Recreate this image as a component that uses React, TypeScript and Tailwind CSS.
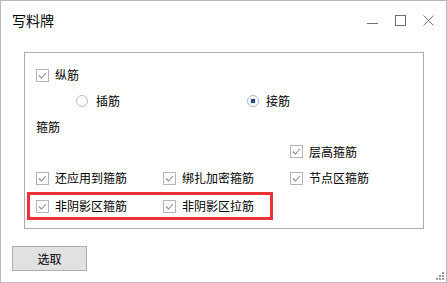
import React from "react";

const font = { fontFamily: '"Noto Sans CJK SC", "Noto Sans", sans-serif' };

function Check() {
  return (
    <svg width="13" height="13" viewBox="0 0 13 13" className="shrink-0">
      <rect x="0.5" y="0.5" width="12" height="12" fill="#fff" stroke="#b4b4b4" />
      <path d="M3 6.5 L5.5 9 L10 4" fill="none" stroke="#8c8c8c" strokeWidth="1.1" />
    </svg>
  );
}

function CheckItem({ label, w }: { label: string; w?: string }) {
  return (
    <div className={`flex items-center gap-[6px] ${w ?? ""}`}>
      <Check />
      <span className="text-[12px] leading-none text-black">{label}</span>
    </div>
  );
}

function Radio({ on }: { on?: boolean }) {
  return (
    <svg width="12" height="12" viewBox="0 0 12 12" className="shrink-0">
      <circle cx="6" cy="6" r="5.5" fill="#fff" stroke={on ? "#9db6d8" : "#bcbcbc"} />
      {on && <rect x="3.5" y="3.5" width="5" height="5" fill="#c9d7ea" />}
      {on && <rect x="4" y="4" width="4" height="4" fill="#2b4a7a" />}
    </svg>
  );
}

export default function App() {
  return (
    <div
      className="w-[447px] h-[283px] border border-[#b9b9b9] bg-white flex flex-col text-black"
      style={font}
    >
      <div className="h-[38px] flex items-center pl-[11px] pr-[12px]">
        <span className="text-[14px] leading-none">写料牌</span>
        <div className="ml-auto flex items-center gap-[17px]">
          <svg width="11" height="11" viewBox="0 0 11 11">
            <path d="M0 8.5 H11" stroke="#6f6f6f" strokeWidth="1" />
          </svg>
          <svg width="11" height="11" viewBox="0 0 11 11">
            <rect x="0.5" y="0.5" width="10" height="10" fill="none" stroke="#6f6f6f" />
          </svg>
          <svg width="11" height="11" viewBox="0 0 11 11">
            <path d="M0.5 0.5 L10.5 10.5 M10.5 0.5 L0.5 10.5" stroke="#7a7a7a" strokeWidth="1" />
          </svg>
        </div>
      </div>

      <div className="ml-[23px] mt-[13px] w-[400px] h-[177px] border border-[#adadad] flex flex-col">
        <div className="mt-[9px] h-[26px] flex items-center pl-[11px]">
          <CheckItem label="纵筋" />
        </div>
        <div className="h-[26px] flex items-center pl-[51px]">
          <div className="w-[171px] flex items-center gap-[8px]">
            <Radio />
            <span className="text-[12px] leading-none">插筋</span>
          </div>
          <div className="flex items-center gap-[7px]">
            <Radio on />
            <span className="text-[12px] leading-none">接筋</span>
          </div>
        </div>
        <div className="h-[26px] flex items-center pl-[11px]">
          <span className="text-[12px] leading-none">箍筋</span>
        </div>
        <div className="h-[23px] flex items-center pl-[265px]">
          <CheckItem label="层高箍筋" />
        </div>
        <div className="mt-[1px] h-[28px] flex items-center pl-[11px]">
          <CheckItem label="还应用到箍筋" w="w-[127px]" />
          <CheckItem label="绑扎加密箍筋" w="w-[127px]" />
          <CheckItem label="节点区箍筋" />
        </div>
        <div className="ml-[2px] w-[246px] h-[28px] border-[3px] border-[#ee3338] flex items-center pl-[6px]">
          <CheckItem label="非阴影区箍筋" w="w-[127px]" />
          <CheckItem label="非阴影区拉筋" />
        </div>
      </div>

      <div className="ml-[11px] mt-[17px] w-[75px] h-[25px] border border-[#adadad] bg-[#e1e1e1] flex items-center justify-center">
        <span className="text-[12px] leading-none">选取</span>
      </div>

      <div className="mt-auto flex justify-end pr-[1px] pb-[1px]">
        <svg width="10" height="10" viewBox="0 0 10 10">
          <rect x="7" y="1" width="2" height="2" fill="#9a9a9a" />
          <rect x="4" y="4" width="2" height="2" fill="#9a9a9a" />
          <rect x="7" y="4" width="2" height="2" fill="#9a9a9a" />
          <rect x="1" y="7" width="2" height="2" fill="#9a9a9a" />
          <rect x="4" y="7" width="2" height="2" fill="#9a9a9a" />
          <rect x="7" y="7" width="2" height="2" fill="#9a9a9a" />
        </svg>
      </div>
    </div>
  );
}
